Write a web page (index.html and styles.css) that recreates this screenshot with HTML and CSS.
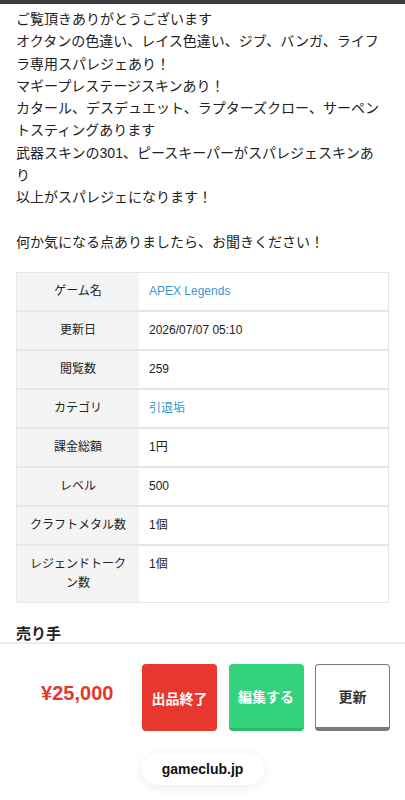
FILE: index.html
```html
<!DOCTYPE html>
<html lang="ja">
<head>
    <meta charset="UTF-8">
    <meta name="viewport" content="width=device-width, initial-scale=1.0">
    <title>APEX Legends アカウント</title>
    <link rel="stylesheet" href="styles.css">
</head>
<body>

    <div class="top-bar"></div>

    <div class="page">
        <p class="description">ご覧頂きありがとうございます<br>オクタンの色違い、レイス色違い、ジブ、バンガ、ライフラ専用スパレジェあり！<br>マギープレステージスキンあり！<br>カタール、デスデュエット、ラプターズクロー、サーペントスティングあります<br>武器スキンの301、ピースキーパーがスパレジェスキンあり<br>以上がスパレジェになります！<br><br>何か気になる点ありましたら、お聞きください！</p>

        <table class="info-table">
            <tr>
                <th>ゲーム名</th>
                <td><a href="#">APEX Legends</a></td>
            </tr>
            <tr>
                <th>更新日</th>
                <td>2026/07/07 05:10</td>
            </tr>
            <tr>
                <th>閲覧数</th>
                <td>259</td>
            </tr>
            <tr>
                <th>カテゴリ</th>
                <td><a href="#">引退垢</a></td>
            </tr>
            <tr>
                <th>課金総額</th>
                <td>1円</td>
            </tr>
            <tr>
                <th>レベル</th>
                <td>500</td>
            </tr>
            <tr>
                <th>クラフトメタル数</th>
                <td>1個</td>
            </tr>
            <tr>
                <th>レジェンドトークン数</th>
                <td>1個</td>
            </tr>
        </table>

        <h3 class="section-title">売り手</h3>
    </div>

    <div class="bottom-bar">
        <div class="action-row">
            <div class="price">¥25,000</div>
            <button class="btn btn-red">出品終了</button>
            <button class="btn btn-green">編集する</button>
            <button class="btn btn-white">更新</button>
        </div>
        <div class="domain-pill">gameclub.jp</div>
    </div>

</body>
</html>
```

FILE: styles.css
```css
body {
    margin: 0;
    font-family: "Liberation Sans", "Noto Sans CJK JP", sans-serif;
    color: #222;
    background-color: #fff;
}
.top-bar {
    height: 4px;
    background-color: #3c3c3c;
}
.page {
    padding: 4px 18px 140px 16px;
}
.description {
    margin: 0;
    font-size: 14px;
    line-height: 22.3px;
}
.info-table {
    width: calc(100% + 2px);
    margin-top: 19px;
    border-collapse: collapse;
    border: 1px solid #e6e6e6;
    font-size: 12px;
    line-height: 19px;
}
.info-table tr {
    border-bottom: 2px solid #e6e6e6;
}
.info-table tr:last-child {
    border-bottom: 1px solid #e6e6e6;
}
.info-table th {
    width: 102px;
    padding: 9px 10px;
    background-color: #f4f4f4;
    font-weight: normal;
    text-align: center;
    vertical-align: top;
}
.info-table td {
    padding: 9px 10px;
    vertical-align: top;
}
.info-table a {
    color: #3a98d0;
    text-decoration: none;
}
.section-title {
    margin: 19px 0 0;
    font-size: 15px;
    font-weight: bold;
}
.bottom-bar {
    position: fixed;
    left: 0;
    right: 0;
    bottom: 0;
    height: 158px;
    background-color: #fff;
    border-top: 2px solid #ececec;
    box-sizing: border-box;
}
.action-row {
    display: flex;
    align-items: center;
    gap: 11.5px;
    padding: 20px 15px 0 0;
}
.price {
    flex: 1;
    text-align: center;
    color: #e2372d;
    font-size: 20px;
    font-weight: bold;
    padding: 0 0 8px 24px;
}
.btn {
    width: 75px;
    height: 67px;
    border: none;
    border-radius: 4px;
    font-family: "Liberation Sans", "Noto Sans CJK JP", sans-serif;
    font-size: 14px;
    font-weight: bold;
    color: #fff;
    padding: 0;
    cursor: pointer;
}
.btn-red {
    background-color: #e8372e;
}
.btn-green {
    background-color: #33d37b;
    border-bottom: 3px solid #2bbd6a;
}
.btn-white {
    background-color: #fff;
    color: #333;
    border: 1px solid #7a7a7a;
    border-bottom: 4px solid #7a7a7a;
}
.domain-pill {
    width: 122px;
    height: 32px;
    margin: 22px auto 0;
    border-radius: 16px;
    background-color: #fff;
    box-shadow: 0 2px 12px rgba(0, 0, 0, 0.08);
    text-align: center;
    line-height: 32px;
    font-size: 14px;
    font-weight: bold;
    color: #111;
}
```
